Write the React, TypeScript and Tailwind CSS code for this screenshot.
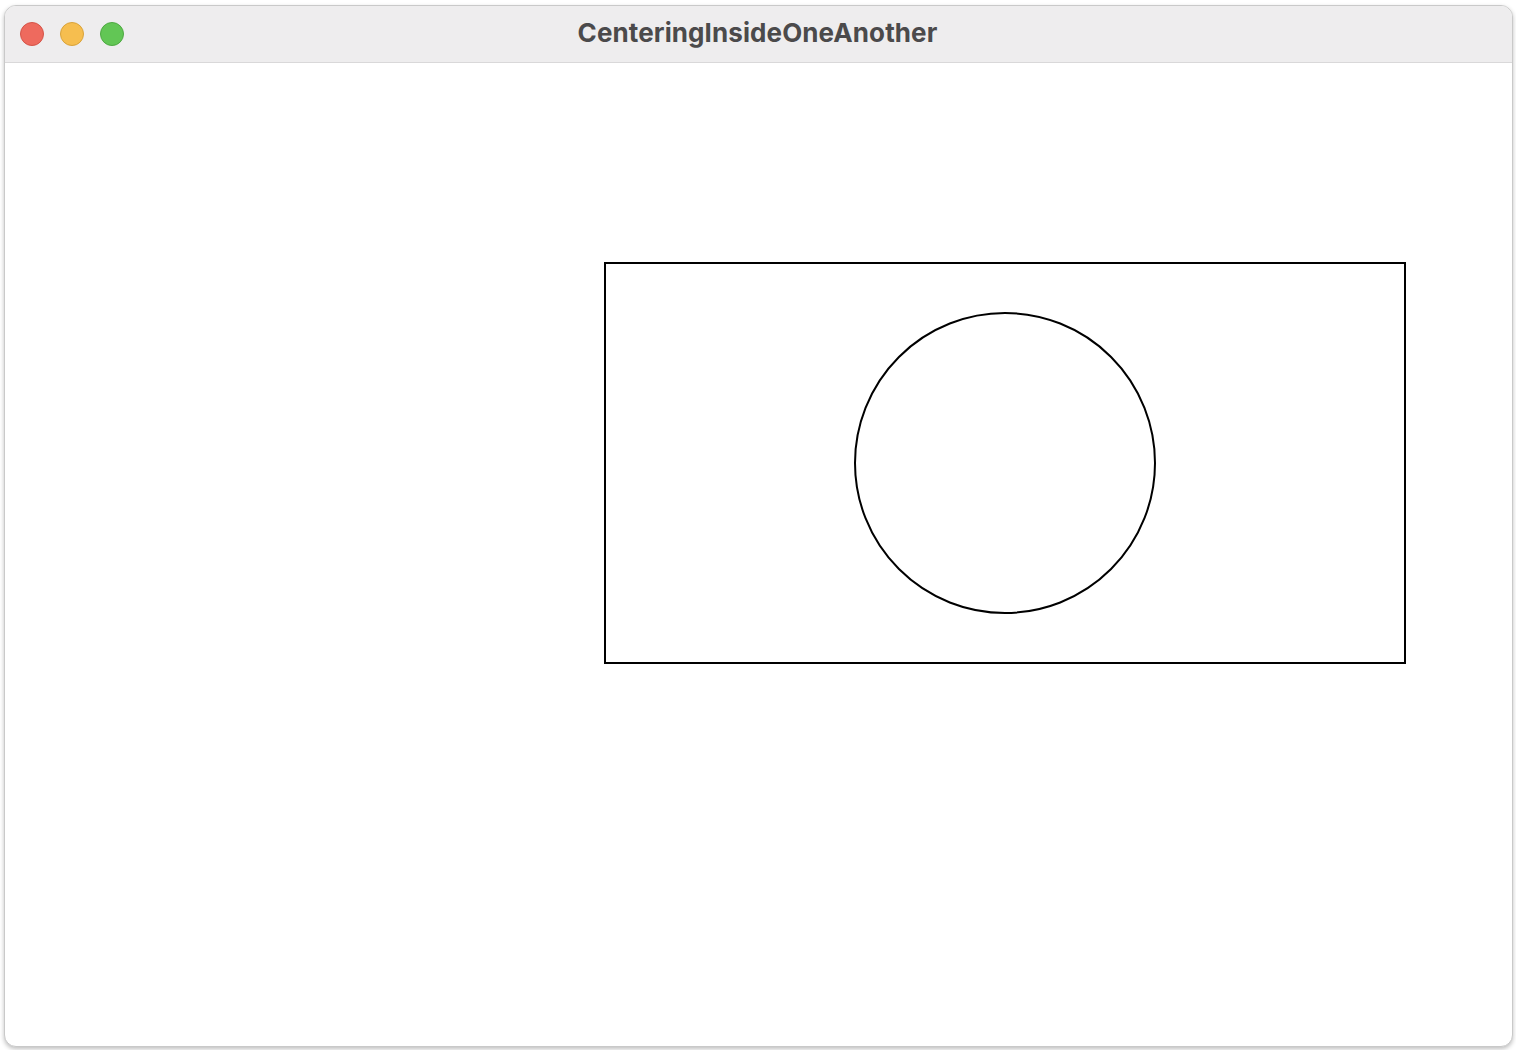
import React from "react";

export default function App() {
  return (
    <div className="w-[1516px] h-[1050px] bg-white relative overflow-hidden">
      <div className="absolute left-[4px] top-[5px] w-[1509px] h-[1042px] rounded-[12px] border border-[#c9c9c9] bg-white overflow-hidden flex flex-col shadow-[0_2px_4px_rgba(0,0,0,0.25)]">
        <div className="h-[57px] shrink-0 bg-[#eeedee] border-b border-[#d9d8d9] flex items-center relative">
          <div className="flex items-center gap-[16px] pl-[15px]">
            <div className="w-[24px] h-[24px] rounded-full bg-[#ee6a5e] border border-[#d55448]" />
            <div className="w-[24px] h-[24px] rounded-full bg-[#f6be4f] border border-[#d9a33a]" />
            <div className="w-[24px] h-[24px] rounded-full bg-[#62c655] border border-[#4ea942]" />
          </div>
          <div className="absolute inset-0 flex items-center justify-center pb-[3px] pr-[2px]">
            <span
              className="text-[26px] font-bold text-[#4b4a4b] tracking-[0.1px]"
              style={{ fontFamily: "Inter, 'Open Sans', sans-serif" }}
            >
              CenteringInsideOneAnother
            </span>
          </div>
        </div>
        <div className="flex-1 pl-[599px] pt-[199px]">
          <div className="w-[802px] h-[402px] border-2 border-black flex items-center justify-center">
            <div className="w-[302px] h-[302px] rounded-full border-2 border-black" />
          </div>
        </div>
      </div>
    </div>
  );
}
